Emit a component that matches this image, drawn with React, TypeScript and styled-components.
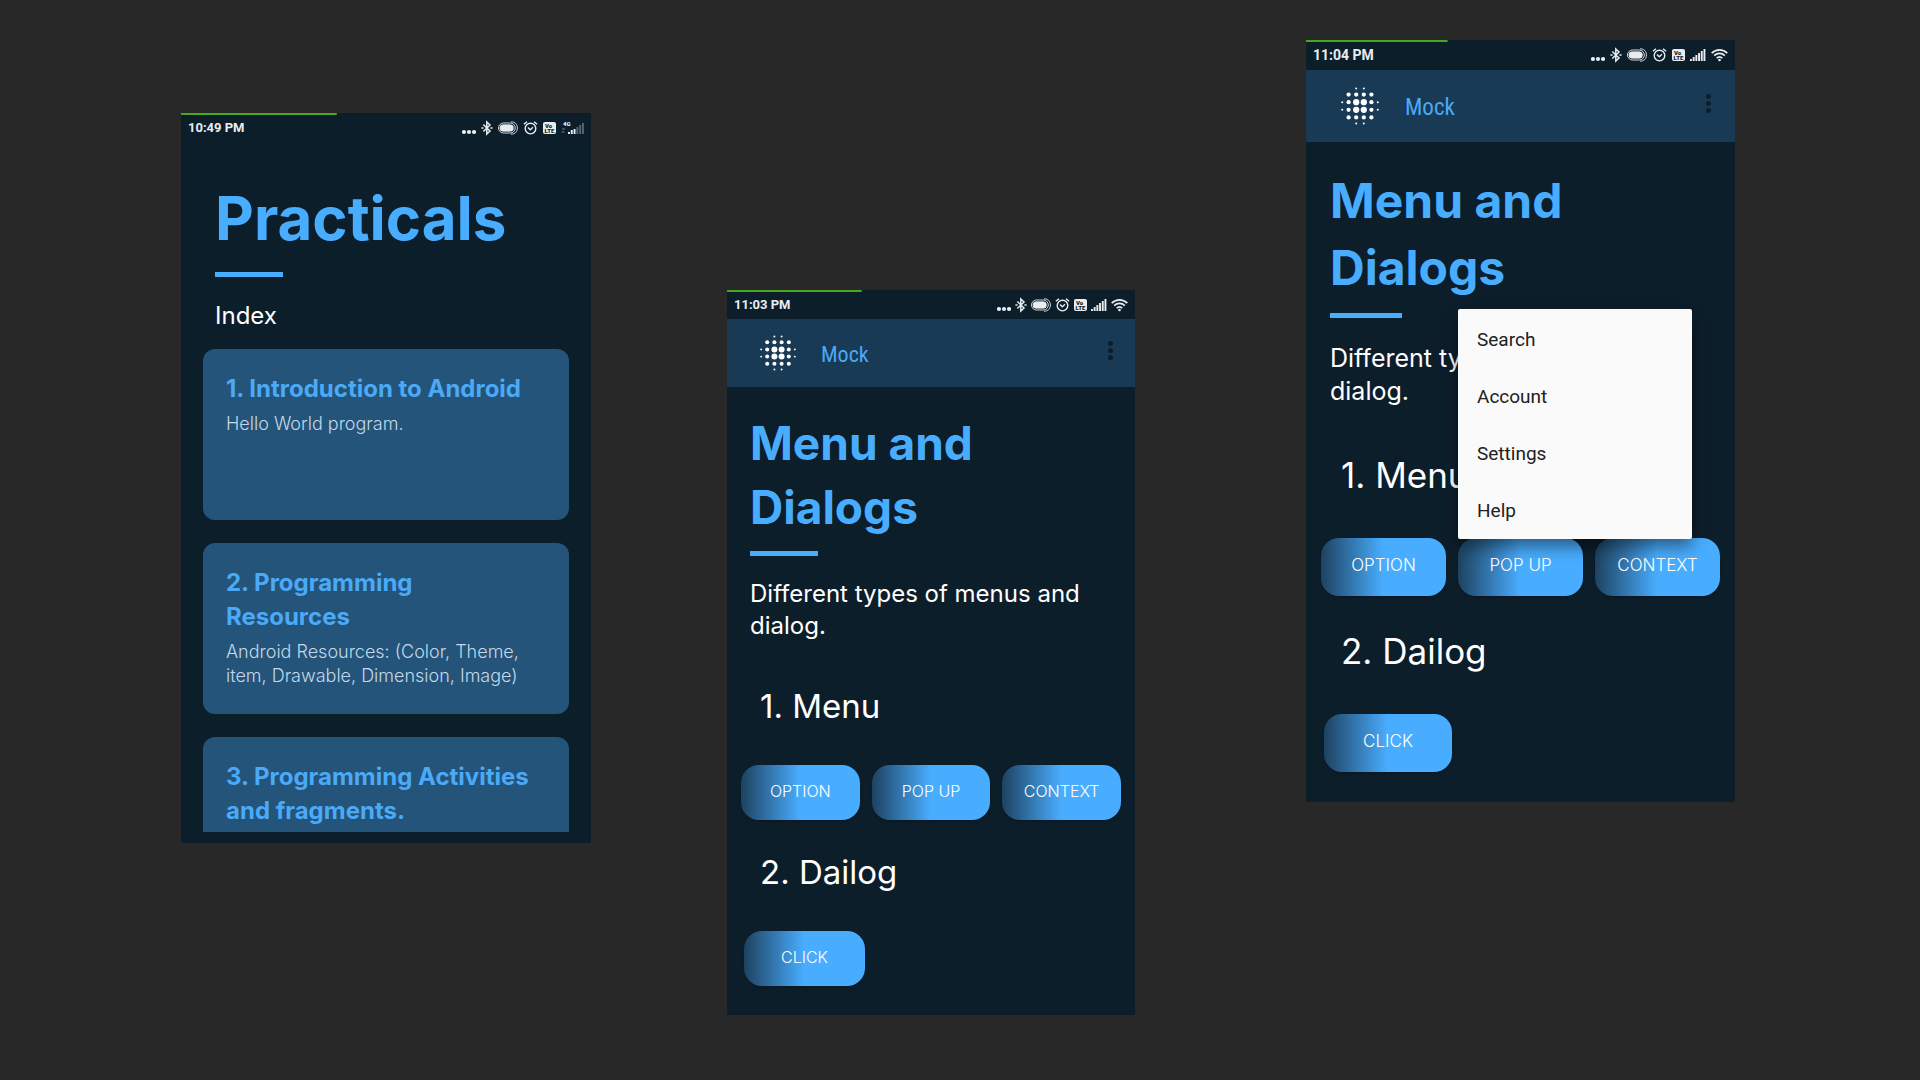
import React from "react";
import styled, { createGlobalStyle, ThemeProvider } from "styled-components";

const GlobalStyle = createGlobalStyle`
  *, *::before, *::after { box-sizing: border-box; }
  body {
    margin: 0;
    background: #282828;
    font-family: Inter, "Open Sans", sans-serif;
    color: #ffffff;
  }
  h1, h2, h3, p, ul { margin: 0; padding: 0; }
  button { border: 0; padding: 0; font: inherit; color: inherit; cursor: pointer; }
`;

/* ---------- metrics of the two screen densities ---------- */

const regular = {
  status: 29,
  time: 13,
  iconGap: 4,
  bar: 68,
  barPad: 33,
  brandGap: 25,
  logo: 36,
  brand: 22,
  kebabPad: 16,
  inset: 23,
  padTop: 24,
  title: 46,
  titleLine: 64,
  rule: 68,
  ruleGap: 12,
  lead: 24,
  leadLine: 32,
  leadGap: 22,
  heading: 33,
  headingLine: 48,
  headingInset: 33,
  firstGap: 40,
  nextGap: 28,
  rowGap: 35,
  rowInset: 14,
  clickInset: 17,
  click: 121,
  button: 55,
  label: 16,
  bottom: 29,
};

const large: typeof regular = {
  status: 30,
  time: 14,
  iconGap: 5,
  bar: 72,
  barPad: 35,
  brandGap: 26,
  logo: 38,
  brand: 23,
  kebabPad: 18,
  inset: 24,
  padTop: 25,
  title: 48,
  titleLine: 67,
  rule: 72,
  ruleGap: 12,
  lead: 25,
  leadLine: 33,
  leadGap: 24,
  heading: 35,
  headingLine: 50,
  headingInset: 35,
  firstGap: 42,
  nextGap: 30,
  rowGap: 38,
  rowInset: 15,
  clickInset: 18,
  click: 128,
  button: 58,
  label: 17,
  bottom: 30,
};

type Metrics = typeof regular;
type T = { theme: any };
const m = (key: keyof Metrics) => (p: T) => `${p.theme[key]}px`;

/* ---------- board ---------- */

const Board = styled.main`
  min-height: 100vh;
  display: grid;
  grid-template-columns: 181fr 410fr 136fr 408fr 171fr 429fr 185fr;
  align-items: start;
`;

const Phone = styled.section<{ $column: number; $drop: number }>`
  grid-column: ${(p) => p.$column};
  grid-row: 1;
  margin-top: ${(p) => p.$drop}px;
  position: relative;
  background: #0d1e2b;
`;

/* ---------- status bar ---------- */

const Status = styled.header<{ $progress: number }>`
  height: ${m("status")};
  padding: 0 7px 0 7px;
  display: flex;
  align-items: center;
  justify-content: space-between;
  color: #e9edf0;
  background: linear-gradient(#45a81e, #45a81e) 0 0 / ${(p) => p.$progress}% 2px no-repeat;
`;

const Time = styled.time`
  font: 700 ${m("time")} / 16px Roboto, sans-serif;
`;

const Icons = styled.div`
  display: flex;
  align-items: center;
  gap: ${m("iconGap")};
  svg { display: block; }
`;

const Dots = () => (
  <svg width="14" height="16" viewBox="0 0 14 16" fill="currentColor">
    <circle cx="2" cy="12" r="2.1" />
    <circle cx="7" cy="12" r="2.1" />
    <circle cx="12" cy="12" r="2.1" />
  </svg>
);

const Bluetooth = () => (
  <svg width="12" height="16" viewBox="0 0 12 16" fill="none" stroke="currentColor" strokeWidth="1.5">
    <path d="M2.3 4.5 9 11 5.8 14V2L9 5 2.3 11.5" />
    <path d="M.4 8h2.200M9.400 8h2.200" />
  </svg>
);

const Pill = () => (
  <svg width="20" height="16" viewBox="0 0 20 16" fill="none" stroke="currentColor">
    <rect x="2.2" y="4.9" width="13" height="6.2" rx="2.6" fill="currentColor" />
    <rect x=".5" y="3" width="16.800" height="10" rx="5" strokeWidth=".9" />
    <path d="M13 1.800c4 0 6.400 2.400 6.400 6.200s-2.400 6.200-6.400 6.200" strokeWidth=".9" />
  </svg>
);

const Alarm = () => (
  <svg width="15" height="16" viewBox="0 0 15 16" fill="none" stroke="currentColor" strokeWidth="1.4">
    <circle cx="7.500" cy="8.600" r="5.300" />
    <path d="M4.900 7.500 7.300 9.700 10 7.300M.9 4.300 4 1.700M14.100 4.300 11 1.700" />
  </svg>
);

const VoLte = () => (
  <svg width="13" height="16" viewBox="0 0 13 16">
    <rect y="2" width="13" height="12" rx="2" fill="currentColor" />
    <g fill="#0d1e2b" fontFamily="Roboto, sans-serif" fontWeight="900" fontSize="6">
      <text x="2" y="7.500">Vo</text>
      <text x="1.500" y="13">LTE</text>
    </g>
  </svg>
);

const Signal = () => (
  <svg width="16" height="16" viewBox="0 0 16 16" fill="currentColor">
    {[2, 4, 6, 8, 10, 12].map((h, i) => (
      <rect key={h} x={i * 2.7} y={14 - h} width="1.900" height={h} />
    ))}
  </svg>
);

const WeakSignal = () => (
  <svg width="23" height="16" viewBox="0 0 23 16" fill="currentColor">
    <text x="2" y="5.500" fontFamily="Roboto, sans-serif" fontWeight="900" fontSize="6">4G</text>
    <path d="M1 9h3M.5 12h3" stroke="currentColor" opacity=".45" />
    {[2, 4, 5, 7, 9, 11].map((h, i) => (
      <rect key={h} x={7 + i * 2.8} y={14 - h} width="1.900" height={h} opacity={i < 3 ? 1 : 0.35} />
    ))}
  </svg>
);

const Wifi = () => (
  <svg width="17" height="16" viewBox="0 0 17 16" fill="none" stroke="currentColor" strokeWidth="1.700">
    <path d="M.7 6.100C5.200 1.700 11.800 1.700 16.300 6.100M3.200 8.700c3.100-3 7.500-3 10.600 0M5.700 11.200c1.700-1.600 3.900-1.600 5.600 0" />
    <circle cx="8.500" cy="13" r="1.300" fill="currentColor" stroke="none" />
  </svg>
);

function StatusBar({ time, progress, cellular }: { time: string; progress: number; cellular?: boolean }) {
  return (
    <Status $progress={progress}>
      <Time>{time}</Time>
      <Icons aria-hidden="true">
        <Dots />
        <Bluetooth />
        <Pill />
        <Alarm />
        <VoLte />
        {cellular ? <WeakSignal /> : <><Signal /><Wifi /></>}
      </Icons>
    </Status>
  );
}

/* ---------- app bar ---------- */

const AppBar = styled.div`
  height: ${m("bar")};
  padding: 0 ${m("kebabPad")} 0 ${m("barPad")};
  display: flex;
  align-items: center;
  background: #193a54;
`;

const LogoMark = styled.svg`
  width: ${m("logo")};
  height: ${m("logo")};
  fill: #ffffff;
`;

const Brand = styled.span`
  margin-left: ${m("brandGap")};
  padding-top: 3px;
  flex: 1;
  font: 400 ${m("brand")} / 28px "Roboto Condensed", Roboto, sans-serif;
  color: #4ba9f5;
`;

const Kebab = styled.button`
  width: 18px;
  height: 26px;
  margin-bottom: 5px;
  display: flex;
  flex-direction: column;
  align-items: center;
  justify-content: center;
  gap: 2px;
  background: none;
  i {
    width: 5px;
    height: 5px;
    border-radius: 50%;
    background: #0d1e2b;
  }
`;

const dotRows: [number, number[]][] = [
  [1.5, [0, 0, 1, 1, 0, 0]],
  [7.5, [0, 2, 2, 2, 2, 0]],
  [15, [1, 2, 3, 3, 2, 1]],
  [22.500, [1, 2, 3, 3, 2, 1]],
  [30, [0, 2, 2, 2, 2, 0]],
  [36, [0, 0, 1, 1, 0, 0]],
];
const dotColumns = [1.2, 7.5, 15, 22.500, 30, 36.300];
const dotRadius = [0, 1, 2.1, 3.1];

function Logo() {
  return (
    <LogoMark viewBox="0 0 37.500 37.500" aria-hidden="true">
      {dotRows.map(([y, row]) =>
        row.map((r, i) => r > 0 && <circle key={`${i}-${y}`} cx={dotColumns[i]} cy={y} r={dotRadius[r]} />)
      )}
    </LogoMark>
  );
}

/* ---------- menu & dialogs screen ---------- */

const Content = styled.div`
  padding: ${m("padTop")} 0 ${m("bottom")};
`;

const Title = styled.h1`
  padding: 0 ${m("inset")};
  font-size: ${m("title")};
  line-height: ${m("titleLine")};
  font-weight: 700;
  color: #49adff;
`;

const Rule = styled.div`
  width: ${m("rule")};
  height: 5px;
  margin: ${m("ruleGap")} ${m("inset")} 0;
  background: #49adff;
`;

const Lead = styled.p`
  margin-top: ${m("leadGap")};
  padding: 0 ${m("inset")};
  font-size: ${m("lead")};
  line-height: ${m("leadLine")};
`;

const Heading = styled.h2<{ $first?: boolean }>`
  margin-top: ${(p) => (p.$first ? p.theme.firstGap : p.theme.nextGap)}px;
  padding-left: ${m("headingInset")};
  font-size: ${m("heading")};
  line-height: ${m("headingLine")};
  font-weight: 400;
`;

const ButtonRow = styled.div<{ $single?: boolean }>`
  margin-top: ${m("rowGap")};
  padding: 0 ${(p) => (p.$single ? p.theme.clickInset : p.theme.rowInset)}px;
  display: grid;
  grid-template-columns: ${(p) => (p.$single ? `${p.theme.click}px` : "repeat(3, 1fr)")};
  gap: 12px;
`;

const Action = styled.button`
  height: ${m("button")};
  padding-bottom: 4px;
  border-radius: 18px;
  background: linear-gradient(90deg, #1d4260, #49adff 50%);
  box-shadow: 0 2px 3px rgba(0, 0, 0, 0.2);
  font-size: ${m("label")};
  font-weight: 300;
`;

const Menu = styled.ul`
  position: absolute;
  top: 269px;
  right: 43px;
  width: 234px;
  padding: 1px 0;
  list-style: none;
  border-radius: 2px;
  background: #fafafa;
  box-shadow: 0 8px 16px rgba(0, 0, 0, 0.45);
`;

const MenuItem = styled.button`
  width: 100%;
  height: 57px;
  padding: 2px 19px 0;
  background: none;
  text-align: left;
  font: 400 19px / 24px Roboto, sans-serif;
  color: #212121;
`;

type ScreenProps = {
  column: number;
  drop: number;
  time: string;
  progress: number;
  metrics: Metrics;
  menu?: string[];
};

function DialogsScreen({ column, drop, time, progress, metrics, menu }: ScreenProps) {
  return (
    <ThemeProvider theme={metrics}>
      <Phone $column={column} $drop={drop}>
        <StatusBar time={time} progress={progress} />
        <AppBar>
          <Logo />
          <Brand>Mock</Brand>
          <Kebab aria-label="More options"><i /><i /><i /></Kebab>
        </AppBar>
        <Content>
          <Title>Menu and<br />Dialogs</Title>
          <Rule />
          <Lead>Different types of menus and dialog.</Lead>
          <Heading $first>1. Menu</Heading>
          <ButtonRow>
            <Action>OPTION</Action>
            <Action>POP UP</Action>
            <Action>CONTEXT</Action>
          </ButtonRow>
          <Heading>2. Dailog</Heading>
          <ButtonRow $single>
            <Action>CLICK</Action>
          </ButtonRow>
        </Content>
        {menu && (
          <Menu>
            {menu.map((item) => (
              <li key={item}><MenuItem>{item}</MenuItem></li>
            ))}
          </Menu>
        )}
      </Phone>
    </ThemeProvider>
  );
}

/* ---------- practicals screen ---------- */

const practicals: Metrics = {
  ...regular,
  iconGap: 5,
  inset: 34,
  title: 60,
  titleLine: 80,
  ruleGap: 14,
  leadLine: 34,
};

const Index = styled.div`
  padding: 36px 0 11px;
`;

const CardList = styled.div`
  height: 483px;
  margin: 16px 22px 0;
  overflow: hidden;
  display: flex;
  flex-direction: column;
  gap: 23px;
`;

const Card = styled.article`
  flex: none;
  min-height: 171px;
  padding: 23px;
  border-radius: 12px;
  background: #245479;
`;

const CardTitle = styled.h2`
  font-size: 24px;
  line-height: 34px;
  font-weight: 700;
  color: #4aaaf8;
`;

const CardText = styled.p`
  margin-top: 6px;
  font-size: 18px;
  line-height: 24px;
  font-weight: 300;
  white-space: nowrap;
  color: #c3d8ea;
`;

function PracticalsScreen() {
  return (
    <ThemeProvider theme={practicals}>
      <Phone $column={2} $drop={113}>
        <StatusBar time="10:49 PM" progress={38} cellular />
        <Index>
          <Title>Practicals</Title>
          <Rule />
          <Lead>Index</Lead>
          <CardList>
            <Card>
              <CardTitle>1. Introduction to Android</CardTitle>
              <CardText>Hello World program.</CardText>
            </Card>
            <Card>
              <CardTitle>2. Programming<br />Resources</CardTitle>
              <CardText>Android Resources: (Color, Theme,<br />item, Drawable, Dimension, Image)</CardText>
            </Card>
            <Card>
              <CardTitle>3. Programming Activities<br />and fragments.</CardTitle>
            </Card>
          </CardList>
        </Index>
      </Phone>
    </ThemeProvider>
  );
}

export default function App() {
  return (
    <>
      <GlobalStyle />
      <Board>
        <PracticalsScreen />
        <DialogsScreen column={4} drop={290} time="11:03 PM" progress={33} metrics={regular} />
        <DialogsScreen
          column={6}
          drop={40}
          time="11:04 PM"
          progress={33}
          metrics={large}
          menu={["Search", "Account", "Settings", "Help"]}
        />
      </Board>
    </>
  );
}
